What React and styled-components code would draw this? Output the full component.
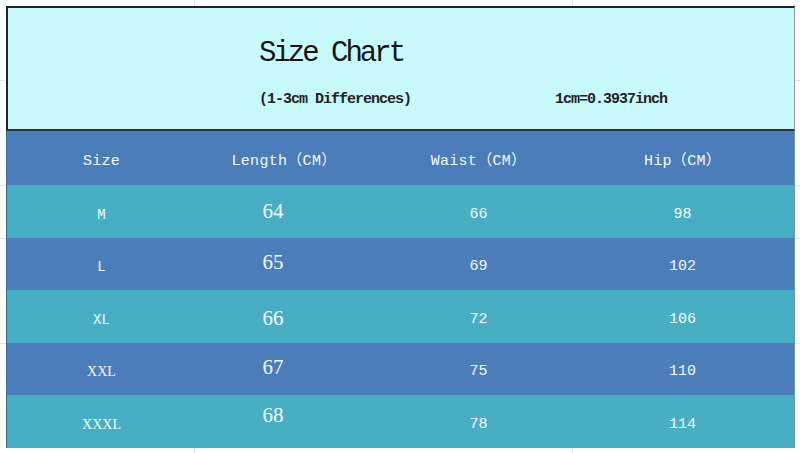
import React from "react";
import styled, { createGlobalStyle } from "styled-components";

const GlobalStyle = createGlobalStyle`
	html, body {
		margin: 0;
		padding: 0;
		background-color: #ffffff;
		background-image:
			linear-gradient(to right, transparent 194px, #e4e4e4 194px, #e4e4e4 195px, transparent 195px),
			linear-gradient(to right, transparent 572px, #e4e4e4 572px, #e4e4e4 573px, transparent 573px),
			linear-gradient(to bottom, transparent 80px, #e4e4e4 80px, #e4e4e4 81px, transparent 81px),
			linear-gradient(to bottom, transparent 185px, #e4e4e4 185px, #e4e4e4 186px, transparent 186px),
			linear-gradient(to bottom, transparent 238px, #e4e4e4 238px, #e4e4e4 239px, transparent 239px),
			linear-gradient(to bottom, transparent 343px, #e4e4e4 343px, #e4e4e4 344px, transparent 344px);
		background-repeat: no-repeat;
		height: 453px;
		overflow: hidden;
	}
`;

const mono = `"Liberation Mono", "Noto Sans CJK SC", monospace`;
const serif = `"Liberation Serif", "Noto Sans CJK SC", serif`;

const Sheet = styled.div`
	padding: 6px 0 0 6px;
	width: 789px;
`;

const TitleBox = styled.div`
	box-sizing: border-box;
	height: 125px;
	background: #c8fafc;
	border-top: 2px solid #1c2626;
	border-left: 2px solid #1c2626;
	border-right: 1px solid #8a9a9a;
	border-bottom: 2px solid #2a3434;
	padding: 27px 0 0 251px;
	display: flex;
	flex-direction: column;
	font-family: ${mono};
	color: #151515;
`;

const Title = styled.div`
	font-size: 29px;
	line-height: 38px;
	letter-spacing: -3px;
`;

const NoteRow = styled.div`
	display: flex;
	margin-top: 18px;
	font-size: 15px;
	line-height: 18px;
	font-weight: bold;
	letter-spacing: -1px;
	color: #222;
`;

const Note = styled.span`
	width: ${(p) => p.width || "auto"};
`;

const Row = styled.div`
	display: grid;
	grid-template-columns: 189px 180px 205px 215px;
	align-items: center;
	height: ${(p) => p.height}px;
	background: ${(p) => (p.teal ? "#47aec4" : "#4b7dba")};
	color: #f2fbff;
	border-left: 1px solid #3a6a9a;
	border-right: 1px solid #6a9ab0;
	box-sizing: border-box;
`;

const Cell = styled.div`
	text-align: center;
	font-family: ${(p) => (p.serif ? serif : mono)};
	font-size: ${(p) => p.size || 15}px;
	line-height: 20px;
	transform: translate(${(p) => p.dx || 0}px, ${(p) => p.dy || 0}px);
`;

const HeaderCell = styled(Cell)`
	font-size: 15px;
	letter-spacing: 0.3px;
`;

const rows = [
	{ size: "M", length: 64, waist: 66, hip: 98, h: 53, dy: 0 },
	{ size: "L", length: 65, waist: 69, hip: 102, h: 52, dy: -1 },
	{ size: "XL", length: 66, waist: 72, hip: 106, h: 53, dy: 2 },
	{ size: "XXL", length: 67, waist: 75, hip: 110, h: 52, dy: -1, serif: true },
	{ size: "XXXL", length: 68, waist: 78, hip: 114, h: 53, dy: -6, serif: true },
];

function App() {
	return (
		<React.Fragment>
			<GlobalStyle />
			<Sheet>
				<TitleBox>
					<Title>Size Chart</Title>
					<NoteRow>
						<Note width='296px'>(1-3cm Differences)</Note>
						<Note>1cm=0.3937inch</Note>
					</NoteRow>
				</TitleBox>
				<Row height={54}>
					<HeaderCell dy={4}>Size</HeaderCell>
					<HeaderCell dx={-2} dy={4}>
						Length（CM）
					</HeaderCell>
					<HeaderCell dy={4}>Waist（CM）</HeaderCell>
					<HeaderCell dx={-6} dy={4}>
						Hip（CM）
					</HeaderCell>
				</Row>
				{rows.map((r, i) => (
					<Row key={r.size} height={r.h} teal={i % 2 === 0}>
						<Cell serif={r.serif} size={r.serif ? 14 : 14} dy={3}>
							{r.size}
						</Cell>
						<Cell serif size={21} dx={-13} dy={r.dy - 1}>
							{r.length}
						</Cell>
						<Cell dy={3}>{r.waist}</Cell>
						<Cell dx={-6} dy={3}>
							{r.hip}
						</Cell>
					</Row>
				))}
			</Sheet>
		</React.Fragment>
	);
}

export default App;
